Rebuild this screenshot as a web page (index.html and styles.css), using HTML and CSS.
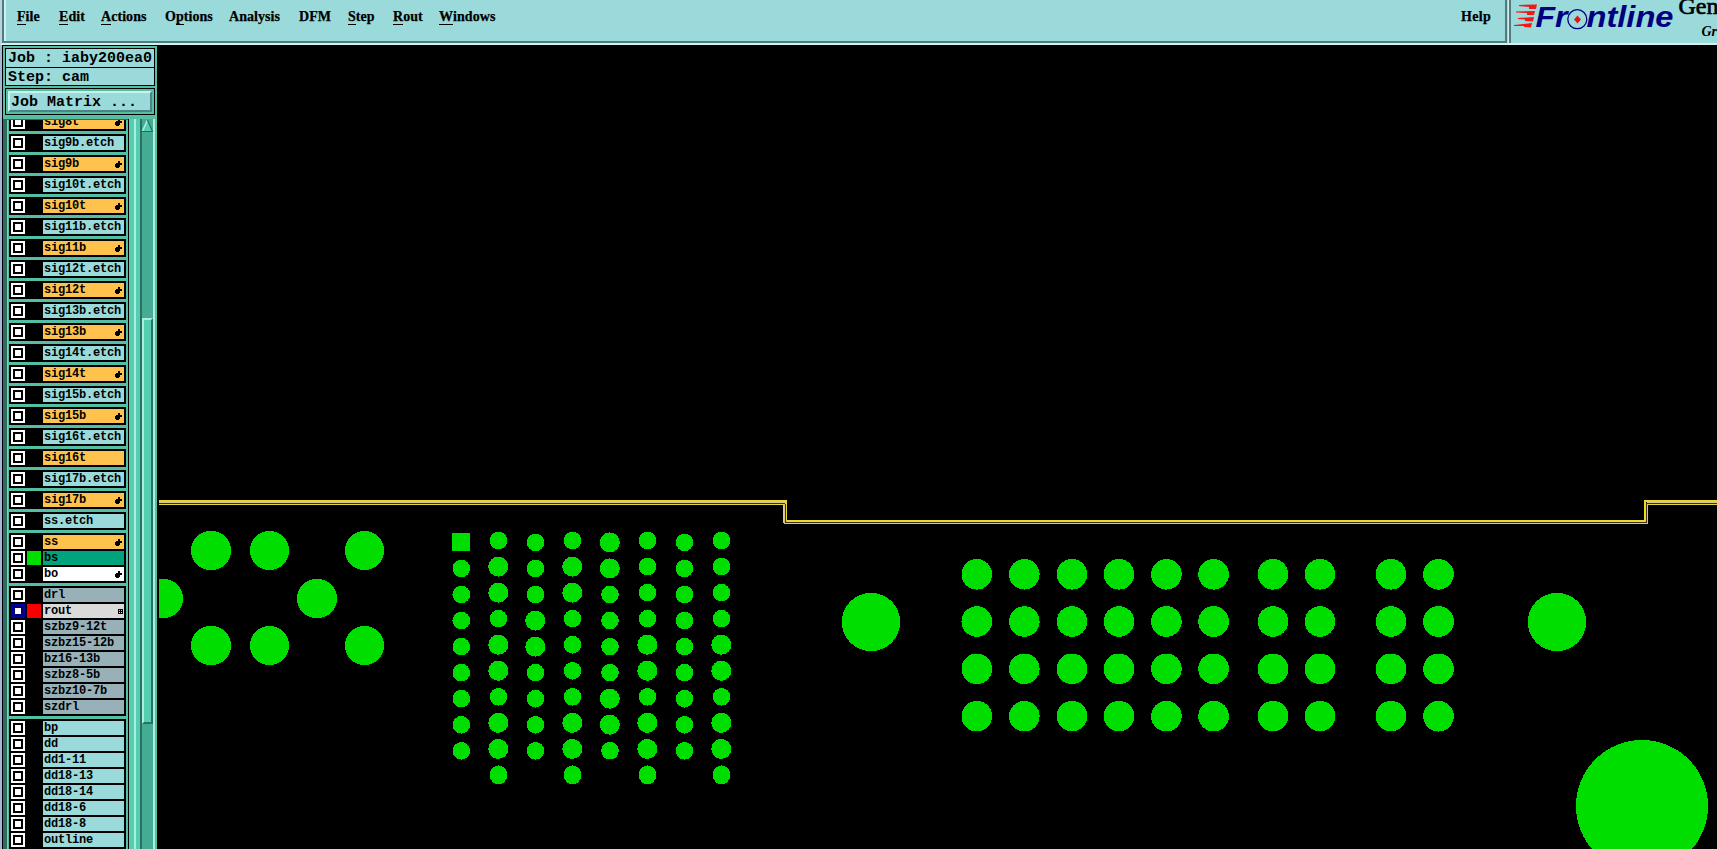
FILE: index.html
```
<!DOCTYPE html>
<html lang="en">
<head>
<meta charset="utf-8">
<title>Graphic Editor</title>
<link rel="stylesheet" href="styles.css">
</head>
<body>
<div class="window">
  <header class="topbar">
    <nav class="menubar">
      <span class="item file"><u>F</u>ile</span>
      <span class="item edit"><u>E</u>dit</span>
      <span class="item actions"><u>A</u>ctions</span>
      <span class="item options">O<u>p</u>tions</span>
      <span class="item analysis">Analysis</span>
      <span class="item dfm">DFM</span>
      <span class="item step"><u>S</u>tep</span>
      <span class="item rout"><u>R</u>out</span>
      <span class="item windows"><u>W</u>indows</span>
      <span class="item help">Help</span>
    </nav>
    <div class="brand">
      <svg class="logo" width="206" height="43" viewBox="1511 0 206 43">
        <g fill="#f01818">
          <path d="M1519 5L1537 4.500L1536 9L1529 9L1529 7L1519 6ZM1516 11.500L1535 11L1534 15L1527 15L1527 13L1516 12.500ZM1518 18L1534 17L1533 21.500L1525 21L1525 19.500L1518 19ZM1514 25L1532 23L1531 27.500L1524 27L1524 26L1514 26Z"/>
        </g>
        <g class="logo-text">
          <text x="1535.500" y="27" textLength="32" lengthAdjust="spacingAndGlyphs">Fr</text>
          <text x="1586.500" y="27" textLength="87" lengthAdjust="spacingAndGlyphs">ntline</text>
        </g>
        <circle cx="1577.300" cy="19.200" r="9.500" fill="none" stroke="#000080" stroke-width="1.300"/>
        <path d="M1577.500 15.500L1581 19.500L1577.500 23.500L1574 19.500Z" fill="#f01010"/>
        <text class="product" x="1678.500" y="13.500">Gen</text>
        <text class="subtitle" x="1701.500" y="36">Gr</text>
      </svg>
    </div>
  </header>
  <main class="workspace">
    <aside class="sidebar">
      <div class="job">
        <div class="job-line">Job : iaby200ea0</div>
        <div class="job-line step-line">Step: cam</div>
      </div>
      <div class="matrix"><button class="matrix-button">Job Matrix ...</button></div>
      <div class="list-area">
        <div class="layers" id="layers"></div>
        <div class="divider"></div>
        <div class="scrollbar">
          <svg class="arrow" width="11" height="12" viewBox="0 0 11 12"><path d="M5.500 0L11 12H0Z" fill="#55ceb1"/><path d="M5.500 0L0 12" stroke="#a9efe0" stroke-width="1.500"/><path d="M5.500 0L10.500 11.500H0" fill="none" stroke="#286b5d" stroke-width="1.200"/></svg>
          <div class="thumb"></div>
        </div>
      </div>
    </aside>
    <svg class="board" id="board" width="1558" height="804" viewBox="159 45 1558 804" shape-rendering="crispEdges">
      <g fill="none" stroke-width="1">
        <path d="M159 501H786V521H1645V501H1717" stroke="#edd52c" stroke-width="2"/>
        <path d="M159 502.500H784.500V523.500H1647.500V502.500H1717" stroke="#cdc695"/>
        <path d="M159 503.500H784.500" stroke="#3c3618"/>
        <path d="M785.500 504V522.500H1646.500V503.500H1717" stroke="#3c3618"/>
        <path d="M159 504.500H783.500V523M1648 504.500H1717" stroke="#e6d440"/>
      </g>
      <g id="pads" fill="#00de00"></g>
    </svg>
  </main>
</div>
<script src="app.js"></script>
</body>
</html>
```
FILE: styles.css
```
*, *::before { box-sizing: border-box; }
body { margin: 0; background: #000; overflow: hidden; }
.window { width: 1717px; height: 849px; display: flex; flex-direction: column; overflow: hidden; }

.topbar { height: 45px; flex: none; display: flex; background: #9adada; border-left: 2px solid #b9d2df; border-bottom: 2px solid #d3f1f1; }
.menubar { width: 1505px; height: 43px; flex: none; display: flex; border-left: 2px solid #527b80; border-right: 2px solid #527b80; border-bottom: 2px solid #527b80; padding: 8px 0 0 13px; box-shadow: inset 2px 0 #cdf3f0; font: bold 14px/18px "Liberation Serif", serif; letter-spacing: .05px; color: #000; -webkit-text-stroke: .25px #000; }
.item { flex: none; white-space: nowrap; }
.item u { text-decoration: none; display: inline-block; height: 17px; border-bottom: 1px solid #000; }
.file { width: 42px; }
.edit { width: 42px; }
.actions { width: 64px; }
.options { width: 64px; }
.analysis { width: 70px; }
.dfm { width: 49px; }
.step { width: 45px; }
.rout { width: 46px; }
.windows { width: 60px; }
.help { margin-left: auto; margin-right: 14px; letter-spacing: .3px; }
.brand { flex: 1; display: flex; border-left: 2px solid #527b80; margin-left: 2px; box-shadow: -1px 0 #d3f1f1; }
.logo { flex: none; }
.logo-text { font: italic bold 30px "Liberation Sans", sans-serif; fill: #000080; }
.product { font: 24px "Liberation Serif", serif; stroke: #000; stroke-width: .7px; }
.subtitle { font: italic bold 14px "Liberation Serif", serif; }

.workspace { flex: 1; display: flex; min-height: 0; }
.sidebar { width: 159px; flex: none; display: flex; flex-direction: column; background: #55bfa6; border-left: 2px solid #a9b8d4; border-right: 2px solid #000; box-shadow: inset 1px 1px #000; padding: 3px 2px 0 3px; font-family: "Liberation Mono", monospace; font-weight: bold; color: #000; }
.job { width: 150px; height: 38px; flex: none; border: 1px solid #000; background: #9adada; }
.job-line { height: 18px; font-size: 15px; line-height: 19px; padding-left: 2px; white-space: pre; }
.step-line { height: 19px; border-top: 1px solid #000; }
.matrix { width: 150px; height: 27px; flex: none; margin: 2px 0 4px; border: 1px solid #000; padding: 2px 2px; display: flex; }
.matrix-button { width: 100%; border: 2px solid; border-color: #c9f3ed #4d8587 #4d8587 #c9f3ed; background: #9adada; font: bold 15px/17px "Liberation Mono", monospace; color: #000; text-align: left; padding: 1px 0 0 1px; }
.list-area { flex: 1; min-height: 0; display: flex; margin-left: -2px; }
.layers { width: 125px; flex: none; height: 730px; overflow: hidden; border-top: 1px solid #2f6b60; border-left: 4px solid #2f6b60; padding-left: 2px; box-shadow: inset 1px 0 #6fd8be; display: flex; flex-direction: column; justify-content: flex-end; gap: 3px; }
.group { width: 117px; flex: none; background: #000; padding: 2px; display: flex; flex-direction: column; gap: 2px; }
.layer { height: 14px; display: flex; gap: 2px; }
.check { width: 14px; height: 14px; background: #fff; display: flex; align-items: center; justify-content: center; }
.check::before { content: ""; width: 10px; height: 10px; border: 2px solid #000; }
.check.on { background: #0000a8; }
.check.on::before { background: #fff; border-color: #000070; }
.swatch { width: 14px; height: 14px; }
.swatch.green { background: #00de00; }
.swatch.red { background: #f80000; }
.name { width: 81px; height: 14px; padding-left: 1px; font-size: 12px; letter-spacing: -.2px; line-height: 15px; display: flex; justify-content: space-between; white-space: nowrap; }
.cyan { background: #9adada; }
.orange { background: #ffc24c; }
.teal { background: #00a47c; }
.white { background: #fff; }
.slate { background: #98b1b9; }
.gray { background: #dadada; }
.hand { margin: 4px 2px 0 0; }
.grid { margin: 5px 1px 0 0; }
.divider { width: 12px; flex: none; background: linear-gradient(90deg, #000 0 1px, #55cdb1 1px 6px, #a9eedf 6px 8px, #55cdb1 8px); }
.scrollbar { width: 15px; flex: none; border-left: 2px solid #2a7063; border-right: 2px solid #a9eedf; background: #46ab95; display: flex; flex-direction: column; padding-top: 1px; }
.arrow { flex: none; }
.thumb { width: 11px; height: 406px; flex: none; margin-top: 186px; background: #55ceb1; border: 2px solid; border-color: #a9eedf #2a7063 #2a7063 #a9eedf; }
.board { flex: none; }
```
FILE: app.js
```
const HAND = '<svg class="hand" width="7" height="7" viewBox="0 0 7 7" shape-rendering="crispEdges"><path d="M3 0H5V2H7V4H5V6H4V7H1V6H0V3H1V2H3Z"/></svg>';
const GRID = '<svg class="grid" width="5" height="5" viewBox="0 0 5 5" shape-rendering="crispEdges"><path d="M.5.5H4.500V4.500H.5ZM2.500 0V5M0 2.500H5" fill="none" stroke="#000" stroke-width="1"/></svg>';

// Each group is a list of [name, row colour, marker, swatch, checked].
const groups = [[["sig8t", "orange", HAND]]];
["9b", "10t", "11b", "12t", "13b", "14t", "15b", "16t", "17b"].forEach(n => {
  groups.push([["sig" + n + ".etch", "cyan"]]);
  groups.push([["sig" + n, "orange", n === "16t" ? "" : HAND]]);
});
groups.push([["ss.etch", "cyan"]]);
groups.push([["ss", "orange", HAND], ["bs", "teal", "", "green"], ["bo", "white", HAND]]);
groups.push([["drl", "slate"], ["rout", "gray", GRID, "red", true]].concat(
  ["szbz9-12t", "szbz15-12b", "bz16-13b", "szbz8-5b", "szbz10-7b", "szdrl"].map(n => [n, "slate"])));
groups.push(["bp", "dd", "dd1-11", "dd18-13", "dd18-14", "dd18-6", "dd18-8", "outline"].map(n => [n, "cyan"]));

document.getElementById("layers").innerHTML = groups.map(g => '<div class="group">' + g.map(
  ([name, color, mark = "", swatch = "", on]) =>
    `<div class="layer"><span class="check${on ? " on" : ""}"></span><span class="swatch ${swatch}"></span><span class="name ${color}"><span>${name}</span>${mark}</span></div>`
).join("") + "</div>").join("");

const pads = [];
const pad = (x, y, rx, ry = rx) => pads.push(`<ellipse cx="${x}" cy="${y}" rx="${rx}" ry="${ry}"/>`);

// Mounting pads
[550.5, 645.5].forEach(y => { pad(211, y, 20.2, 19.7); pad(269.5, y, 19.7); pad(364.5, y, 19.7); });
pad(163.3, 598.5, 19.7);
pad(317, 598.5, 20.2, 19.7);
pad(871, 622, 29.2);
pad(1557, 622, 29.2);
pad(1642, 806, 66);

// Connector field: wide pads by column
const wide = [[], [1, 2, 4, 5, 7, 8], [3, 4], [1, 2, 7, 8], [0, 1, 6, 7], [4, 5, 7, 8], [], [4, 5, 7, 8]];
[461.3, 498.5, 535.5, 572.5, 610, 647.5, 684.5, 721.5].forEach((x, c) => {
  const even = c % 2 === 1;
  for (let r = 0; r < (even ? 10 : 9); r++) {
    const y = (even ? 540.5 : 542.4) + r * 26.05;
    if (c === 0 && r === 0) pads.push('<rect x="452" y="533" width="18" height="18"/>');
    else if (wide[c].includes(r)) pad(x - .2, y, 10);
    else pad(x, y, 8.8, r === 9 ? 9.5 : 8.8);
  }
});

// Pin array
[976.8, 1024.3, 1072, 1119, 1166.4, 1213.6, 1273, 1320, 1391, 1438.5].forEach(x =>
  [574.3, 621.5, 668.8, 716.2].forEach(y => pad(x, y, 15.3)));

document.getElementById("pads").innerHTML = pads.join("");
```
